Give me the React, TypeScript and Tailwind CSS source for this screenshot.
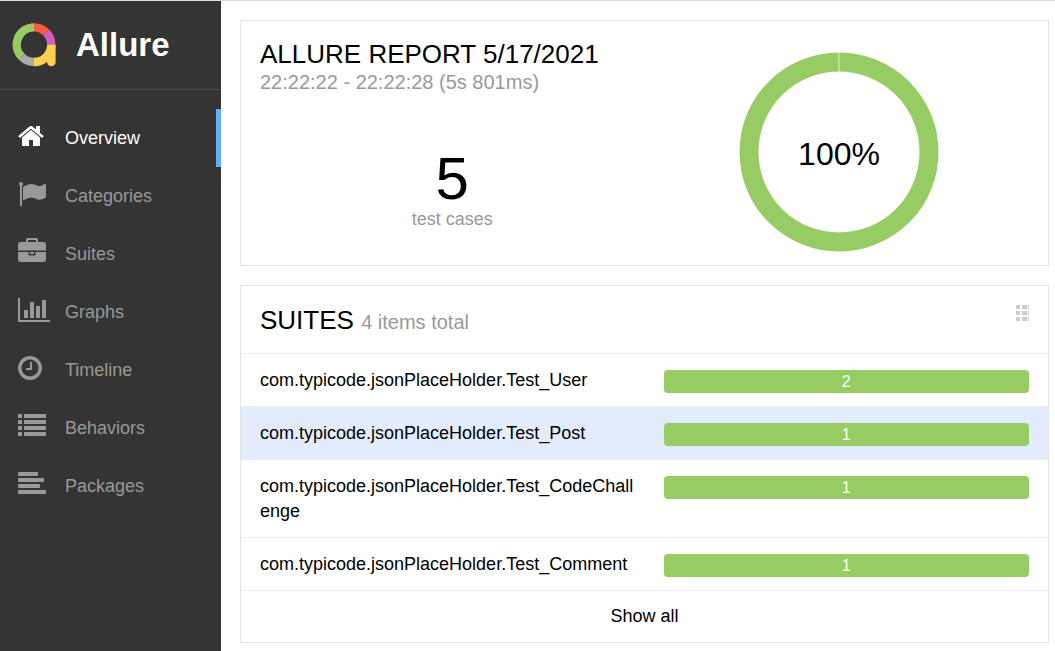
import type { ReactNode } from "react";

type NavItem = { label: string; width: number; icon: ReactNode };

const navItems: NavItem[] = [
  {
    label: "Overview",
    width: 1664,
    icon: (
      <path d="M1408 992v480q0 26-19 45t-45 19h-384v-384h-256v384h-384q-26 0-45-19t-19-45v-480q0-1 .5-3t.5-3l575-474 575 474q1 2 1 6zm223-69l-62 74q-8 9-21 11h-3q-13 0-21-7l-692-577-692 577q-12 8-24 7-13-2-21-11l-62-74q-8-10-7-23.5t11-21.5l719-599q32-26 76-26t76 26l244 204v-195q0-14 9-23t23-9h192q14 0 23 9t9 23v408l219 182q10 8 11 21.5t-7 23.5z" />
    ),
  },
  {
    label: "Categories",
    width: 1792,
    icon: (
      <path d="M320 256q0 72-64 110v1266q0 13-9.5 22.5t-22.5 9.5h-64q-13 0-22.5-9.5t-9.5-22.5v-1266q-64-38-64-110 0-53 37.5-90.5t90.5-37.5 90.5 37.5 37.5 90.5zm1472 64v763q0 25-12.5 38.5t-39.5 27.5q-215 116-369 116-61 0-123.5-22t-108.5-48-115.5-48-142.5-22q-192 0-464 146-17 9-33 9-26 0-45-19t-19-45v-742q0-32 31-55 21-14 79-43 236-120 421-120 107 0 200 29t219 88q38 19 88 19 54 0 117.5-21t110-47 88-47 54.5-21q26 0 45 19t19 45z" />
    ),
  },
  {
    label: "Suites",
    width: 1792,
    icon: (
      <path d="M640 256h512v-128h-512v128zm1152 640v480q0 66-47 113t-113 47h-1472q-66 0-113-47t-47-113v-480h672v160q0 26 19 45t45 19h320q26 0 45-19t19-45v-160h672zm-768 0v128h-256v-128h256zm768-480v384h-1792v-384q0-66 47-113t113-47h352v-160q0-40 28-68t68-28h576q40 0 68 28t28 68v160h352q66 0 113 47t47 113z" />
    ),
  },
  {
    label: "Graphs",
    width: 2048,
    icon: (
      <path d="M640 896v512h-256v-512h256zm384-512v1024h-256v-1024h256zm1024 1152v128h-2048v-1536h128v1408h1920zm-640-896v768h-256v-768h256zm384-384v1152h-256v-1152h256z" />
    ),
  },
  {
    label: "Timeline",
    width: 1536,
    icon: (
      <path d="M896 544v448q0 14-9 23t-23 9h-320q-14 0-23-9t-9-23v-64q0-14 9-23t23-9h224v-352q0-14 9-23t23-9h64q14 0 23 9t9 23zm416 352q0-148-73-273t-198-198-273-73-273 73-198 198-73 273 73 273 198 198 273 73 273-73 198-198 73-273zm224 0q0 209-103 385.5t-279.5 279.5-385.5 103-385.5-103-279.5-279.5-103-385.5 103-385.5 279.5-279.5 385.5-103 385.5 103 279.5 279.5 103 385.5z" />
    ),
  },
  {
    label: "Behaviors",
    width: 1792,
    icon: (
      <g>
        {[128, 512, 896, 1280].map((y) => (
          <g key={y}>
            <rect x="0" y={y} width="256" height="256" rx="32" />
            <rect x="384" y={y} width="1408" height="256" rx="32" />
          </g>
        ))}
      </g>
    ),
  },
  {
    label: "Packages",
    width: 1792,
    icon: (
      <g>
        <rect x="0" y="128" width="1280" height="256" rx="64" />
        <rect x="0" y="512" width="1664" height="256" rx="64" />
        <rect x="0" y="896" width="1408" height="256" rx="64" />
        <rect x="0" y="1280" width="1792" height="256" rx="64" />
      </g>
    ),
  },
];

const suites = [
  { name: "com.typicode.jsonPlaceHolder.Test_User", passed: 2 },
  { name: "com.typicode.jsonPlaceHolder.Test_Post", passed: 1 },
  { name: "com.typicode.jsonPlaceHolder.Test_CodeChallenge", passed: 1 },
  { name: "com.typicode.jsonPlaceHolder.Test_Comment", passed: 1 },
];

function Logo() {
  return (
    <svg width="44" height="44" viewBox="0 0 44 44" fill="none" strokeWidth="8.4" aria-hidden="true">
      <path d="M9.8 33.9A17.3 17.3 0 0 1 22 4.4" stroke="#97cc64" />
      <path d="M22 4.4A17.3 17.3 0 0 1 34.2 9.5" stroke="#fd5a3e" />
      <path d="M34.2 9.5A17.3 17.3 0 0 1 39.3 21.7" stroke="#d35ebe" />
      <path d="M22 39A17.3 17.3 0 0 1 9.8 33.9" stroke="#aaaaaa" />
      <path d="M39.3 21.7A17.3 17.3 0 0 1 22 39" stroke="#ffd050" />
      <path d="M35.1 21.7h8.5v17.4a4.2 4.2 0 0 1-8.5 0z" fill="#ffd050" stroke="none" />
    </svg>
  );
}

function Sidebar() {
  return (
    <aside className="w-[221px] shrink-0 bg-[#343434]">
      <div className="flex h-[89px] items-center gap-5 border-b border-[#505050] pl-3">
        <Logo />
        <span className="text-[33px] leading-10 font-bold text-white">Allure</span>
      </div>
      <nav className="pt-[19px]">
        {navItems.map((item, index) => (
          <a
            key={item.label}
            href={`#${item.label.toLowerCase()}`}
            aria-current={index === 0 ? "page" : undefined}
            className={
              index === 0
                ? "flex h-[58px] items-center border-r-5 border-[#5fb0f5] pl-[18px] text-white"
                : "flex h-[58px] items-center border-r-5 border-transparent pl-[18px] text-[#999999]"
            }
          >
            <span className="w-[47px] pb-1">
              <svg
                width={item.width / 64}
                height="28"
                viewBox={`0 0 ${item.width} 1792`}
                fill="currentColor"
                aria-hidden="true"
              >
                {item.icon}
              </svg>
            </span>
            <span className="text-lg leading-7">{item.label}</span>
          </a>
        ))}
      </nav>
    </aside>
  );
}

function Summary() {
  return (
    <section className="grid h-[246px] grid-cols-2 border border-[#e4e4e4] px-[19px] pt-[19px]">
      <div>
        <h1 className="text-[26px] leading-7">ALLURE REPORT 5/17/2021</h1>
        <p className="text-xl leading-7 text-[#999999]">22:22:22 - 22:22:28 (5s 801ms)</p>
        <div className="pt-[53px] text-center">
          <div className="text-[60px] leading-[60px]">5</div>
          <div className="text-lg leading-5 text-[#999999]">test cases</div>
        </div>
      </div>
      <div className="flex items-start justify-center pt-3 pl-1">
        <svg width="200" height="200" viewBox="0 0 200 200" role="img" aria-label="100% passed">
          <circle cx="100" cy="100" r="90" fill="none" stroke="#97cc64" strokeWidth="19" />
          <path d="M100 0v20" stroke="#ffffff" strokeOpacity=".7" />
          <text x="100" y="113" textAnchor="middle" fontSize="32" fill="#000000">
            100%
          </text>
        </svg>
      </div>
    </section>
  );
}

function Suites() {
  return (
    <section className="border border-[#e4e4e4]">
      <header className="flex h-[68px] items-center justify-between border-b border-[#ececec] px-[19px]">
        <h2 className="text-[26px] leading-8">
          SUITES <small className="text-xl text-[#999999]">4 items total</small>
        </h2>
        <button type="button" aria-label="Move widget" className="pb-3">
          <svg width="13" height="17" viewBox="0 0 13 17" fill="#cccccc" aria-hidden="true">
            {[0, 6, 12].map((y) => (
              <g key={y}>
                <rect x="0" y={y} width="4" height="4" />
                <rect x="6" y={y} width="5" height="4" />
                <rect x="12" y={y} width="1" height="4" />
              </g>
            ))}
          </svg>
        </button>
      </header>
      <ul>
        {suites.map((suite, index) => (
          <li key={suite.name} className="border-b border-[#ececec]">
            <a
              href="#suites"
              className={index === 1 ? "grid grid-cols-2 bg-[#e3ecfd]" : "grid grid-cols-2"}
            >
              <span className="pt-[14px] pr-2 pb-[13px] pl-[19px] text-lg leading-[25px] break-all">
                {suite.name}
              </span>
              <span className="px-[19px] pt-4">
                <span className="block h-[23px] rounded-sm bg-[#97cc64] text-center text-base leading-[23px] text-white">
                  {suite.passed}
                </span>
              </span>
            </a>
          </li>
        ))}
      </ul>
      <a href="#suites" className="block py-[13px] text-center text-lg leading-[25px]">
        Show all
      </a>
    </section>
  );
}

export default function App() {
  return (
    <div className="flex min-h-screen flex-col bg-white font-['Liberation_Sans',Arial,sans-serif] text-black">
      <div className="h-px bg-[#dcdde1]" />
      <div className="flex flex-1">
        <Sidebar />
        <main className="flex min-w-0 flex-1 flex-col gap-[19px] pt-[19px] pr-[6px] pb-2 pl-[19px]">
          <Summary />
          <Suites />
        </main>
      </div>
    </div>
  );
}
